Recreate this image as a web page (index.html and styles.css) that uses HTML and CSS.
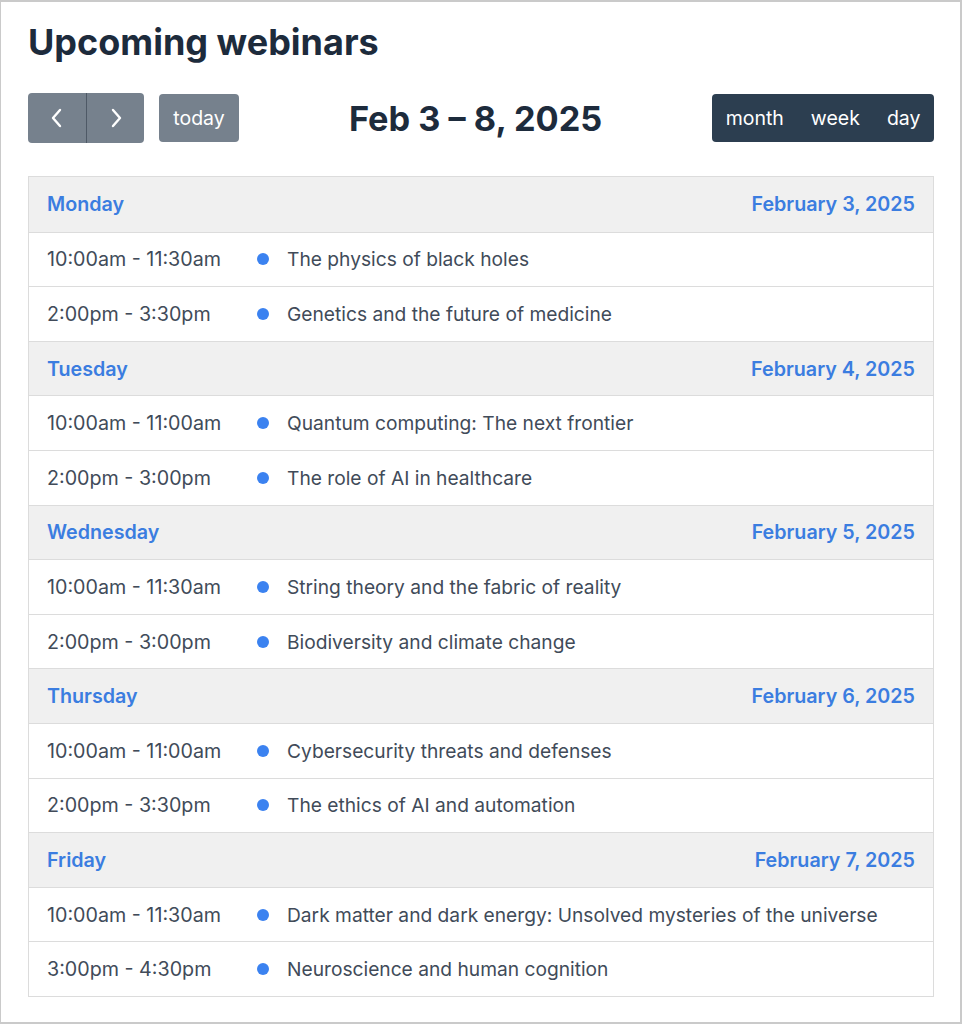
FILE: index.html
```html
<!DOCTYPE html>
<html>
<head>
<meta charset="utf-8">
<link rel="stylesheet" href="styles.css">
</head>
<body>
<div class="frame">
  <h1 class="title">Upcoming webinars</h1>
  <div class="toolbar">
    <div class="left">
      <div class="btn-group">
        <button class="btn dis icon"><svg width="16" height="22" viewBox="0 0 16 22"><path d="M11 3 L4 11 L11 19" fill="none" stroke="#fff" stroke-width="2.4" stroke-linecap="round" stroke-linejoin="round"/></svg></button>
        <button class="btn dis icon"><svg width="16" height="22" viewBox="0 0 16 22"><path d="M5 3 L12 11 L5 19" fill="none" stroke="#fff" stroke-width="2.4" stroke-linecap="round" stroke-linejoin="round"/></svg></button>
      </div>
      <button class="btn dis today">today</button>
    </div>
    <h2 class="range">Feb 3 – 8, 2025</h2>
    <div class="btn-group views">
      <button class="btn dark">month</button>
      <button class="btn dark">week</button>
      <button class="btn dark">day</button>
    </div>
  </div>
  <div class="list">
    <div class="day"><span>Monday</span><span>February 3, 2025</span></div>
    <div class="ev"><span class="time">10:00am - 11:30am</span><span class="dot"></span><span class="name">The physics of black holes</span></div>
    <div class="ev"><span class="time">2:00pm - 3:30pm</span><span class="dot"></span><span class="name">Genetics and the future of medicine</span></div>
    <div class="day"><span>Tuesday</span><span>February 4, 2025</span></div>
    <div class="ev"><span class="time">10:00am - 11:00am</span><span class="dot"></span><span class="name">Quantum computing: The next frontier</span></div>
    <div class="ev"><span class="time">2:00pm - 3:00pm</span><span class="dot"></span><span class="name">The role of AI in healthcare</span></div>
    <div class="day"><span>Wednesday</span><span>February 5, 2025</span></div>
    <div class="ev"><span class="time">10:00am - 11:30am</span><span class="dot"></span><span class="name">String theory and the fabric of reality</span></div>
    <div class="ev"><span class="time">2:00pm - 3:00pm</span><span class="dot"></span><span class="name">Biodiversity and climate change</span></div>
    <div class="day"><span>Thursday</span><span>February 6, 2025</span></div>
    <div class="ev"><span class="time">10:00am - 11:00am</span><span class="dot"></span><span class="name">Cybersecurity threats and defenses</span></div>
    <div class="ev"><span class="time">2:00pm - 3:30pm</span><span class="dot"></span><span class="name">The ethics of AI and automation</span></div>
    <div class="day"><span>Friday</span><span>February 7, 2025</span></div>
    <div class="ev"><span class="time">10:00am - 11:30am</span><span class="dot"></span><span class="name">Dark matter and dark energy: Unsolved mysteries of the universe</span></div>
    <div class="ev"><span class="time">3:00pm - 4:30pm</span><span class="dot"></span><span class="name">Neuroscience and human cognition</span></div>
  </div>
</div>
</body>
</html>
```
FILE: styles.css
```css
* { box-sizing: border-box; }
html, body { margin: 0; padding: 0; background: #fff; }
body { font-family: Inter, "Noto Sans", sans-serif; }
.frame {
  width: 962px;
  height: 1024px;
  border: 2px solid #cacaca;
  border-left-width: 1px;
  padding: 0 26px 0 27px;
}
.title {
  margin: 0;
  padding-top: 17px;
  font-size: 36px;
  line-height: 46px;
  font-weight: 700;
  color: #1d2b3c;
}
.toolbar {
  margin-top: 28px;
  display: flex;
  align-items: center;
  justify-content: space-between;
  height: 50px;
}
.left { display: flex; align-items: center; gap: 15px; }
.btn-group { display: flex; }
.btn {
  border: none;
  font-family: inherit;
  font-size: 19.5px;
  color: #fff;
  height: 48px;
  padding: 0 14px;
  border-radius: 4px;
}
.btn-group .btn { border-radius: 0; }
.btn-group .btn:first-child { border-radius: 4px 0 0 4px; }
.btn-group .btn:last-child { border-radius: 0 4px 4px 0; }
.dis { background: #76818d; }
.icon { width: 58px; height: 50px; display: flex; align-items: center; justify-content: center; padding: 0; }
.icon + .icon { border-left: 1px solid #4e5966; }
.today { width: 80px; padding: 0; }
.range {
  margin: 0;
  font-size: 34.3px;
  font-weight: 700;
  color: #1d2b3c;
}
.dark { background: #2c3e50; padding: 0 13.5px; }
.list {
  margin-top: 33px;
  border: 1px solid #dcdcdc;
}
.day, .ev {
  height: 54.6px;
  display: flex;
  align-items: center;
  padding: 0 18px;
  border-top: 1px solid #dcdcdc;
  font-size: 19.7px;
}
.day:first-child { border-top: none; }
.day {
  background: #f0f0f0;
  justify-content: space-between;
  color: #3b7de0;
  font-weight: 600;
}
.ev { color: #414b59; }
.time { width: 210px; }
.name { font-size: 19.2px; }
.dot {
  width: 12px; height: 12px; border-radius: 50%;
  background: #3b82f0;
  margin-right: 18px;
}
```
